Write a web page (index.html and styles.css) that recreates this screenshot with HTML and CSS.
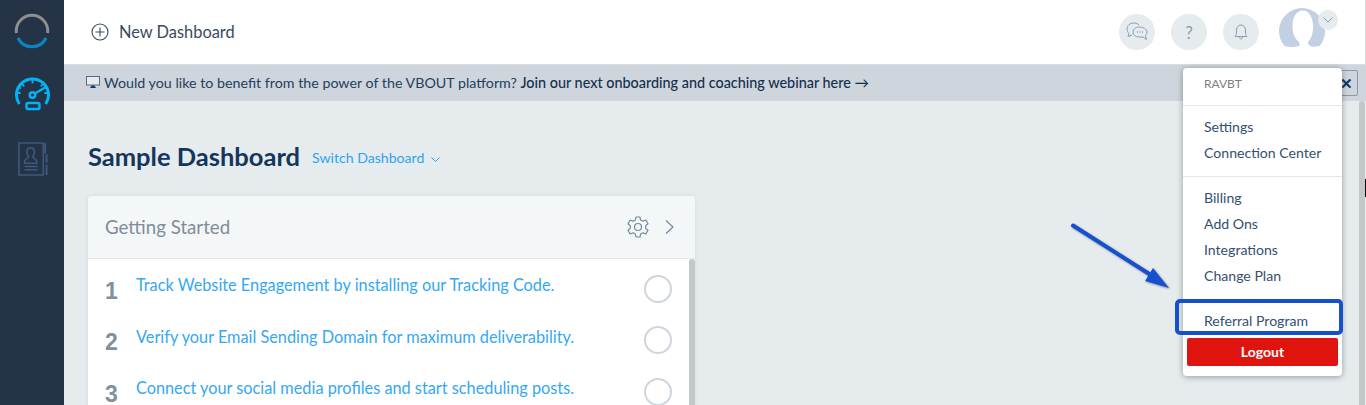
FILE: index.html

```html
<!doctype html>
<html>
<head>
    <title>Sample Dashboard</title>
    <link rel="stylesheet" href="styles.css">
</head>

<body>

<div class="sidebar">
    <svg class="side_logo" width="36" height="36" viewBox="0 0 36 36" fill="none" stroke-width="3">
        <path d="M2.430 20 A15.700 15.700 0 1 1 33.570 20" stroke="#8d8f91"/>
        <path d="M3.950 25 A15.700 15.700 0 0 0 32.050 25" stroke="#0a87c4"/>
    </svg>
    <svg class="side_icon" width="36" height="36" viewBox="0 0 36 36" fill="none" stroke="#00b4f5" stroke-width="2.400">
        <path d="M5.300 27 A16 16 0 1 1 31.700 27" stroke-width="3"/>
        <path d="M18.500 3 V6.500 M8 6.500 L10.200 9.500 M29 6.500 L26.800 9.500 M3 16 H6.500 M30.500 16 H34 M4 10 L7 11.500 M33 10 L30 11.500" stroke-width="1.800"/>
        <circle cx="18.500" cy="18" r="2.800"/>
        <path d="M21 16.500 L31 10.500"/>
        <rect x="12.500" y="26" width="13" height="6" rx="1.600"/>
    </svg>
    <svg class="side_icon side_icon_off" width="30" height="34" viewBox="0 0 32 36" fill="none" stroke="#3d5a7c" stroke-width="1.700">
        <path d="M27 1 H1 V35 H27 Z"/>
        <path d="M29 1 V12 M30.500 13 V22 M30.500 24 V35" stroke-width="2"/>
        <path d="M13.500 6 C10.500 6 9.500 8.500 9.500 10.500 C9.500 13 11 14 11 16 C11 17.500 7 18 7 20.500 V22.500 H20 V20.500 C20 18 16 17.500 16 16 C16 14 17.500 13 17.500 10.500 C17.500 8.500 16.500 6 13.500 6 Z"/>
        <path d="M7 26 H21 M7 29.500 H21"/>
    </svg>
</div>

<div class="main">
    <div class="topbar">
        <a class="new_dash">
            <svg width="18" height="18" viewBox="0 0 18 18" fill="none" stroke="#3b4a60" stroke-width="1.100">
                <circle cx="9" cy="9" r="8"/>
                <path d="M9 4.500 V13.500 M4.500 9 H13.500"/>
            </svg>
            <span>New Dashboard</span>
        </a>
        <div class="top_tools">
            <span class="round_btn">
                <svg width="22" height="20" viewBox="0 0 22 20" fill="none" stroke="#8a9db0" stroke-width="1">
                    <path d="M13 3 C12 1.500 10 1 8 1 C4 1 1 3.500 1 7 C1 9 2 10.500 3 11.500 L2 14.500 L6 13"/>
                    <path d="M13 5 C9.500 5 7 7.200 7 10 C7 12.800 9.500 15 13 15 H17 L20.500 17.500 L19.500 13.500 C20.500 12.500 21 11.300 21 10 C21 7.200 17 5 13 5 Z" fill="#e6ebee"/>
                    <path d="M11 10 H12 M13.500 10 H14.500 M16 10 H17" stroke="#66788a" stroke-width="1.200"/>
                </svg>
            </span>
            <span class="round_btn help_mark">?</span>
            <span class="round_btn">
                <svg width="14" height="16" viewBox="0 0 14 16" fill="none" stroke="#8a9db0" stroke-width="1">
                    <path d="M1 12.500 H13 C11.800 11.500 11.500 10 11.500 8 V6 C11.500 3.300 9.500 1 7 1 C4.500 1 2.500 3.300 2.500 6 V8 C2.500 10 2.200 11.500 1 12.500 Z"/>
                    <path d="M5.500 13 C5.500 15.500 8.500 15.500 8.500 13"/>
                </svg>
            </span>
            <span class="avatar">
                <svg width="46" height="39" viewBox="0 0 46 39">
                    <path d="M5.500 38 A23 23 0 1 1 40.500 38 Q36 39 32 38.500 Q28 36 29 34 Q33 30 34 22 C35 10 30 2.500 24 2.500 C17 2.500 13 10 13.500 20 Q14 29 19 33 Q22 36 20 38 Q12 40 5.500 38 Z" fill="#c3cfe2"/>
                </svg>
                <span class="avatar_caret">
                    <svg width="10" height="6" viewBox="0 0 10 6" fill="none" stroke="#8a9db0" stroke-width="1"><path d="M0.500 0.500 L5 5 L9.500 0.500"/></svg>
                </span>
            </span>
        </div>
    </div>

    <div class="banner">
        <svg width="14" height="13" viewBox="0 0 14 13">
            <rect x="0.500" y="0.500" width="13" height="8.500" fill="#e6ebf2" stroke="#5b6a80"/>
            <path d="M4 12 H10 L8.500 9.500 H5.500 Z" fill="#1b3a5c"/>
        </svg>
        <span>Would you like to benefit from the power of the VBOUT platform? <b>Join our next onboarding and coaching webinar here &#8594;</b></span>
        <span class="banner_close">&#10005;</span>
    </div>

    <div class="content">
        <div class="page_title">
            <h1>Sample Dashboard</h1>
            <a class="switch_dash">Switch Dashboard
                <svg width="9" height="5" viewBox="0 0 9 5" fill="none" stroke="#2ea3f2"><path d="M0.500 0.500 L4.500 4.500 L8.500 0.500"/></svg>
            </a>
        </div>

        <div class="card">
            <div class="card_head">
                <span class="card_title">Getting Started</span>
                <svg width="24" height="24" viewBox="0 0 24 24" fill="none" stroke="#73879c" stroke-width="1.200">
                    <circle cx="12" cy="12" r="3.500"/>
                    <path d="M10 2 H14 L14.600 5 L17 6.200 L19.800 5 L22 8.700 L19.700 10.600 V13.400 L22 15.300 L19.800 19 L17 17.800 L14.600 19 L14 22 H10 L9.400 19 L7 17.800 L4.200 19 L2 15.300 L4.300 13.400 V10.600 L2 8.700 L4.200 5 L7 6.200 L9.400 5 Z" stroke-linejoin="round"/>
                </svg>
                <svg width="9" height="14" viewBox="0 0 9 14" fill="none" stroke="#73879c" stroke-width="1.200"><path d="M1 0.500 L8 7 L1 13.500"/></svg>
            </div>
            <div class="card_body">
                <div class="step_list">
                    <div class="step">
                        <span class="step_num">1</span>
                        <a class="step_link">Track Website Engagement by installing our Tracking Code.</a>
                        <span class="step_check"></span>
                    </div>
                    <div class="step">
                        <span class="step_num">2</span>
                        <a class="step_link">Verify your Email Sending Domain for maximum deliverability.</a>
                        <span class="step_check"></span>
                    </div>
                    <div class="step">
                        <span class="step_num">3</span>
                        <a class="step_link">Connect your social media profiles and start scheduling posts.</a>
                        <span class="step_check"></span>
                    </div>
                </div>
                <div class="card_scroll"></div>
            </div>
        </div>
        <div class="page_scroll"></div>
    </div>
</div>

<div class="user_menu">
    <div class="menu_group menu_user">RAVBT</div>
    <div class="menu_group">
        <a>Settings</a>
        <a>Connection Center</a>
    </div>
    <div class="menu_group">
        <a>Billing</a>
        <a>Add Ons</a>
        <a>Integrations</a>
        <a>Change Plan</a>
    </div>
    <div class="menu_group menu_refer">
        <a>Referral Program</a>
    </div>
    <div class="logout_btn">Logout</div>
</div>

<!-- annotation drawn over the screenshot -->
<div class="refer_box"></div>
<svg class="refer_arrow" width="112" height="72" viewBox="0 0 112 72">
    <path d="M3 2.500 L84 54" stroke="#1550cf" stroke-width="4" stroke-linecap="round"/>
    <path d="M99 65 L75 58 L83 45 Z" fill="#1550cf"/>
</svg>
<div class="cursor_mark"></div>

</body>
</html>
```

FILE: styles.css

```css
html, body {
    height: 100%;
}

body {
    margin: 0;
    display: flex;
    overflow: hidden;
    background: #e6ebee;
    color: #1b3a5c;
    font-family: Lato, "Noto Sans", sans-serif;
}

a {
    cursor: pointer;
}

.sidebar {
    width: 64px;
    flex: none;
    background: #253347;
    display: flex;
    flex-direction: column;
    align-items: center;
    padding-top: 13px;
    box-sizing: border-box;
}
.side_logo {
    margin-bottom: 28px;
}
.side_icon {
    margin-bottom: 29px;
}
.side_icon_off {
    margin-left: 2px;
}

.main {
    flex: 1;
    min-width: 0;
    display: flex;
    flex-direction: column;
}

.topbar {
    height: 64px;
    flex: none;
    background: #fff;
    border-bottom: 1px solid #d9dde0;
    border-right: 1px solid #d9dde0;
    display: flex;
    align-items: center;
    justify-content: space-between;
    padding: 0 40px 0 27px;
}
.new_dash {
    display: flex;
    align-items: center;
    gap: 10px;
    font-size: 16.400px;
    color: #3b4a60;
}
.new_dash span {
    padding-bottom: 2px;
}
.top_tools {
    display: flex;
    align-items: center;
    gap: 16px;
}
.round_btn {
    width: 36px;
    height: 36px;
    border-radius: 50%;
    background: #e6ebee;
    display: flex;
    align-items: center;
    justify-content: center;
}
.help_mark {
    color: #8a9db0;
    font-size: 17px;
}
.avatar {
    position: relative;
    width: 46px;
    height: 39px;
    margin: 0 0 9px 4px;
}
.avatar svg {
    display: block;
}
.avatar_caret {
    position: absolute;
    top: 2px;
    right: -13px;
    width: 20px;
    height: 20px;
    border-radius: 50%;
    background: #e6ebee;
    display: flex;
    align-items: center;
    justify-content: center;
}

.banner {
    height: 36px;
    flex: none;
    box-sizing: border-box;
    background: #ced5dc;
    display: flex;
    align-items: center;
    gap: 4px;
    padding: 0 0 2px 22px;
    font-size: 14.250px;
    color: #24405f;
    position: relative;
}
.banner b {
    font-size: 14.400px;
    font-weight: 500;
    color: #14304f;
}
.banner_close {
    position: absolute;
    right: 8px;
    top: 5px;
    width: 24px;
    height: 26px;
    border: 1px solid #8f979f;
    border-radius: 2px;
    box-sizing: border-box;
    font-size: 15px;
    font-weight: 900;
    line-height: 24px;
    text-align: center;
    color: #0d3a66;
}

.content {
    flex: 1;
    min-height: 0;
    padding: 39px 0 0 24px;
    position: relative;
}
.page_title {
    display: flex;
    align-items: center;
    gap: 12px;
    margin-bottom: 23px;
}
.page_title h1 {
    margin: 0;
    font-size: 25.500px;
    font-weight: 700;
    line-height: 33px;
    color: #14365c;
}
.switch_dash {
    margin-top: 2px;
    font-size: 14.100px;
    color: #2ea3f2;
}
.switch_dash svg {
    margin-left: 3px;
    vertical-align: middle;
}
.page_scroll {
    position: absolute;
    top: 0;
    right: 1px;
    bottom: 0;
    width: 6px;
    background: #c4c7c9;
    border-radius: 3px 3px 0 0;
}

.card {
    width: 607px;
    background: #fff;
    border-radius: 4px 4px 0 0;
    box-shadow: 0 0 4px rgba(0,0,0,.08);
}
.card_head {
    height: 63px;
    box-sizing: border-box;
    background: #f4f7f8;
    border-bottom: 1px solid #e3e8eb;
    border-radius: 4px 4px 0 0;
    display: flex;
    align-items: center;
    gap: 15px;
    padding: 0 21px 0 17px;
}
.card_title {
    flex: 1;
    font-size: 18.700px;
    color: #7f8c99;
}
.card_body {
    display: flex;
    justify-content: space-between;
}
.step_list {
    flex: 1;
    padding: 0 17px;
}
.step {
    height: 51.500px;
    display: flex;
    align-items: center;
    gap: 20px;
}
.step_num {
    width: 11px;
    margin-top: 13px;
    font-size: 23px;
    font-weight: 700;
    color: #7f90a2;
    font-family: "Liberation Sans", sans-serif;
}
.step_link {
    flex: 1;
    font-size: 16.300px;
    color: #35a7f5;
}
.step_check {
    width: 28px;
    height: 28px;
    margin-top: 8px;
    box-sizing: border-box;
    border: 2px solid #ced5dc;
    border-radius: 50%;
}
.card_scroll {
    width: 6px;
    background: #c4c7c9;
    border-radius: 3px 3px 0 0;
}

.user_menu {
    position: absolute;
    left: 1183px;
    top: 68px;
    width: 159px;
    background: #fff;
    border-radius: 4px;
    box-shadow: 0 1px 6px rgba(0,0,0,.35);
}
.menu_group {
    padding: 8px 20px 10px 21px;
    border-bottom: 1px solid #e3e8eb;
    font-size: 14.100px;
    display: flex;
    flex-direction: column;
}
.menu_group a {
    height: 26px;
    line-height: 26px;
    color: #34506f;
}
.menu_user {
    height: 38px;
    box-sizing: border-box;
    padding-top: 8px;
    font-size: 12px;
    color: #7b7f84;
}
.menu_refer {
    border-bottom: 0;
    padding-bottom: 0;
}
.logout_btn {
    margin: 4px 4px 10px;
    height: 28px;
    line-height: 28px;
    background: #e0140f;
    border-radius: 2px;
    color: #fff;
    font-size: 14px;
    font-weight: 700;
    text-align: center;
}

.refer_box {
    position: absolute;
    left: 1175px;
    top: 299px;
    width: 168px;
    height: 36px;
    box-sizing: border-box;
    border: 4px solid #1550cf;
    border-radius: 5px;
}
.refer_arrow {
    position: absolute;
    left: 1070px;
    top: 223px;
    filter: drop-shadow(1px 1px 1px rgba(0,0,0,.4));
}
.cursor_mark {
    position: absolute;
    left: 1365px;
    top: 179px;
    width: 1px;
    height: 18px;
    background: #111;
}
```
